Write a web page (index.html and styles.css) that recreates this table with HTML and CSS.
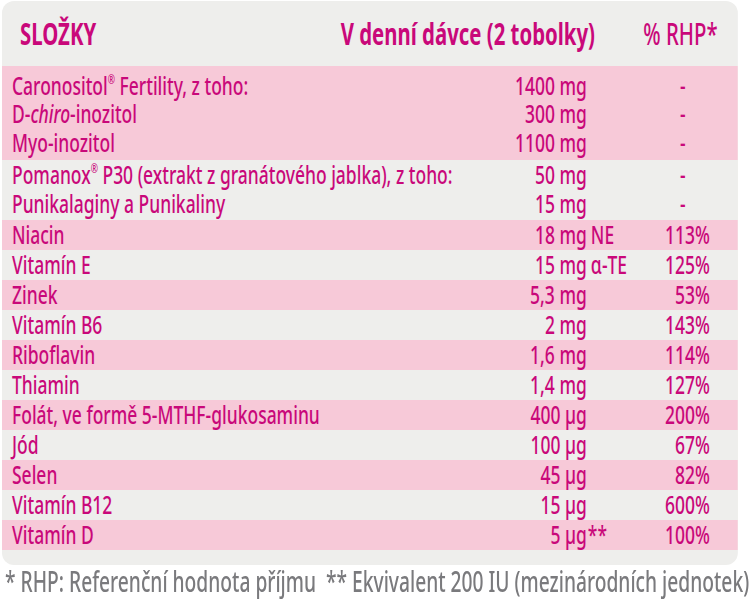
FILE: index.html
```html
<!DOCTYPE html>
<html lang="cs">
<head>
<meta charset="utf-8">
<title>Složky</title>
<link rel="stylesheet" href="styles.css">
</head>
<body>
<div class="frame">
<div class="sheet">
  <div class="card">
    <div class="head">
      <div class="h-name">SLOŽKY</div>
      <div class="h-dose">V denní dávce (2 tobolky)</div>
      <div class="h-pct">% RHP*</div>
    </div>
    <div class="group pink g1">
      <div class="row"><span class="name">Caronositol<sup class="reg">®</sup> Fertility, z toho:</span><span class="amt">1400 mg</span><span class="suf"></span><span class="pct dash">-</span></div>
      <div class="row"><span class="name">D-<i>chiro</i>-inozitol</span><span class="amt">300 mg</span><span class="suf"></span><span class="pct dash">-</span></div>
      <div class="row"><span class="name">Myo-inozitol</span><span class="amt">1100 mg</span><span class="suf"></span><span class="pct dash">-</span></div>
    </div>
    <div class="group gray g2">
      <div class="row"><span class="name">Pomanox<sup class="reg">®</sup> P30 (extrakt z granátového jablka), z toho:</span><span class="amt">50 mg</span><span class="suf"></span><span class="pct dash">-</span></div>
      <div class="row"><span class="name">Punikalaginy a Punikaliny</span><span class="amt">15 mg</span><span class="suf"></span><span class="pct dash">-</span></div>
    </div>
    <div class="row pink"><span class="name">Niacin</span><span class="amt">18 mg</span><span class="suf">NE</span><span class="pct">113%</span></div>
    <div class="row gray"><span class="name">Vitamín E</span><span class="amt">15 mg</span><span class="suf">α-TE</span><span class="pct">125%</span></div>
    <div class="row pink"><span class="name">Zinek</span><span class="amt">5,3 mg</span><span class="suf"></span><span class="pct">53%</span></div>
    <div class="row gray"><span class="name">Vitamín B6</span><span class="amt">2 mg</span><span class="suf"></span><span class="pct">143%</span></div>
    <div class="row pink"><span class="name">Riboflavin</span><span class="amt">1,6 mg</span><span class="suf"></span><span class="pct">114%</span></div>
    <div class="row gray"><span class="name">Thiamin</span><span class="amt">1,4 mg</span><span class="suf"></span><span class="pct">127%</span></div>
    <div class="row pink"><span class="name">Folát, ve formě 5-MTHF-glukosaminu</span><span class="amt">400 µg</span><span class="suf"></span><span class="pct">200%</span></div>
    <div class="row gray"><span class="name">Jód</span><span class="amt">100 µg</span><span class="suf"></span><span class="pct">67%</span></div>
    <div class="row pink"><span class="name">Selen</span><span class="amt">45 µg</span><span class="suf"></span><span class="pct">82%</span></div>
    <div class="row gray"><span class="name">Vitamín B12</span><span class="amt">15 µg</span><span class="suf"></span><span class="pct">600%</span></div>
    <div class="row pink"><span class="name">Vitamín D</span><span class="amt">5 µg</span><span class="suf stars">**</span><span class="pct">100%</span></div>
    <div class="foot"></div>
  </div>
  <p class="note">* RHP: Referenční hodnota příjmu&nbsp; ** Ekvivalent 200 IU (mezinárodních jednotek)</p>
</div>
</div>
</body>
</html>
```

FILE: styles.css
```css
html, body {
  margin: 0;
  padding: 0;
  background: #ffffff;
}
body {
  padding: 1px 0 0 2px;
  font-family: "Noto Sans", "Open Sans", sans-serif;
  font-size: 26px;
  font-weight: 500;
  color: #c9087a;
}
.frame {
  width: 753px;
  height: 599px;
  overflow: hidden;
}
/* the reference uses a condensed face: the whole sheet is narrowed horizontally */
.sheet {
  width: 1095px;
  transform: scaleX(0.672);
  transform-origin: 0 0;
}
.card {
  background: #eeeeec;
  border-radius: 18px / 12px;
  overflow: hidden;
}
.head {
  display: grid;
  grid-template-columns: minmax(0, 1fr) auto 182.6px;
  height: 65px;
  align-items: center;
  padding: 0 30px 0 26.8px;
  font-size: 30.3px;
  line-height: 40px;
  white-space: nowrap;
}
.h-name, .h-dose {
  font-weight: bold;
}
.h-pct {
  justify-self: end;
}
.pink { background: #f7c9d8; }
.gray { background: #eeeeec; }
.row {
  display: grid;
  grid-template-columns: minmax(0, 1fr) 178.6px 102.7px 80.4px;
  padding: 0 41.7px 0 14.9px;
  height: 30px;
  line-height: 29.5px;
  white-space: nowrap;
}
.g1 {
  padding: 4.5px 0 4px;
}
.g1 .row {
  height: 28.5px;
  line-height: 29px;
}
.g2 {
  padding: 0 0 2px;
}
.g2 .row {
  height: 29px;
  line-height: 29.5px;
}
.amt {
  text-align: right;
}
.suf {
  padding-left: 6px;
}
.suf.stars {
  padding-left: 1.5px;
}
.pct {
  text-align: right;
}
.pct.dash {
  text-align: center;
}
.reg {
  font-size: 0.5em;
  vertical-align: 0.85em;
  line-height: 0;
}
.foot {
  height: 15px;
}
.note {
  margin: 1px 0 0 4.5px;
  font-size: 28.6px;
  line-height: 30px;
  color: #7a7a7d;
  white-space: nowrap;
}
```
